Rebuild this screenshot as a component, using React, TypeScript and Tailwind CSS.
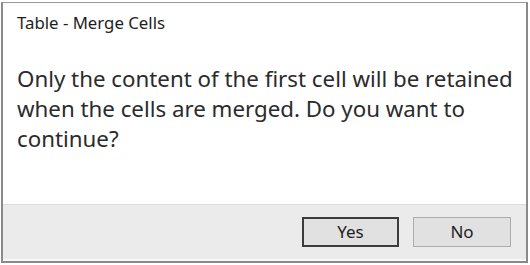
export default function App() {
  return (
    <div className="h-[265px] w-[530px] bg-white pl-[1px] pt-[2px]">
      <div className="flex h-[261px] w-[527px] flex-col border-2 border-t border-[#8a8a8a] border-t-[#9a9a9a] bg-white font-['Noto_Sans',sans-serif] text-[#2b2b2b]">
        <div className="flex-1 pl-[14px] pr-[8px]">
          <h1 className="mt-[9px] text-[16.8px] leading-[22px] text-[#1e1e1e]">Table - Merge Cells</h1>
          <p className="mt-[30px] text-[22.3px] leading-[30px]">
            Only the content of the first cell will be retained
            <br />
            when the cells are merged. Do you want to
            <br />
            continue?
          </p>
        </div>
        <div className="flex h-[57px] items-center justify-end gap-[14px] border-t border-b-2 border-t-[#dcdcdc] border-b-[#f8f8f8] bg-[#ebebeb] pr-[15px]">
          <button className="h-[30px] w-[97px] border-2 border-[#3c3c3c] bg-[#e1e1e1] text-[17px] text-[#1e1e1e]">
            Yes
          </button>
          <button className="h-[30px] w-[98px] border border-[#adadad] bg-[#e1e1e1] text-[17px] text-[#1e1e1e]">
            No
          </button>
        </div>
      </div>
    </div>
  );
}
